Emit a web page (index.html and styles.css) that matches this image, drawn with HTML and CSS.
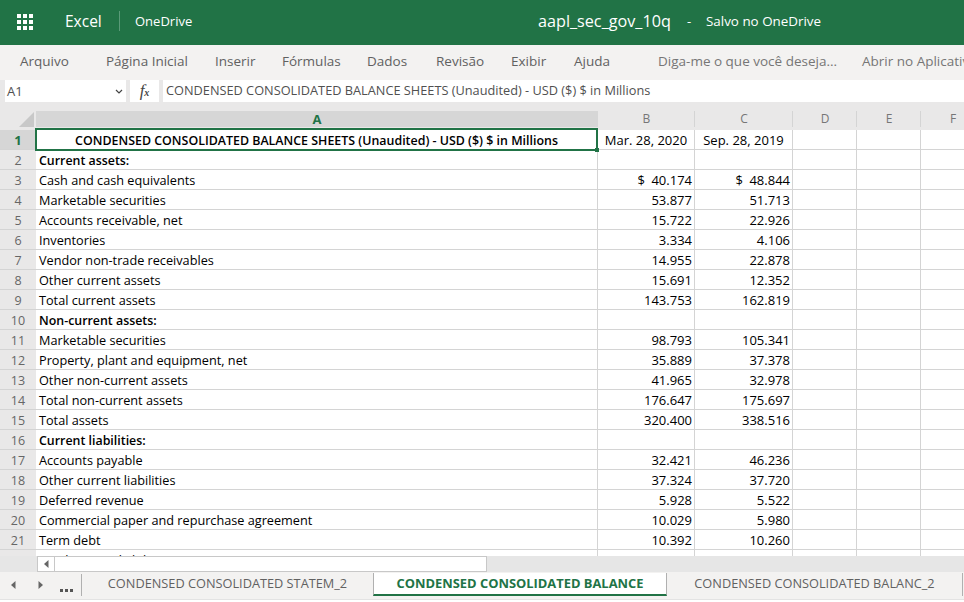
FILE: index.html
```html
<!DOCTYPE html>
<html lang="pt">

<head>
  <meta charset="UTF-8">
  <meta name="viewport" content="width=device-width, initial-scale=1.0">
  <title>aapl_sec_gov_10q - Excel</title>
  <link rel="stylesheet" href="styles.css">
</head>

<body>
  <header class="topbar">
    <svg class="waffle" width="16" height="16" viewBox="0 0 16 16" fill="#fff">
      <rect x="0" y="0" width="4" height="4"/><rect x="6" y="0" width="4" height="4"/><rect x="12" y="0" width="4" height="4"/>
      <rect x="0" y="6" width="4" height="4"/><rect x="6" y="6" width="4" height="4"/><rect x="12" y="6" width="4" height="4"/>
      <rect x="0" y="12" width="4" height="4"/><rect x="6" y="12" width="4" height="4"/><rect x="12" y="12" width="4" height="4"/>
    </svg>
    <span class="app-name">Excel</span>
    <span class="location">OneDrive</span>
    <span class="doc-name">aapl_sec_gov_10q</span>
    <span class="doc-dash">-</span>
    <span class="doc-status">Salvo no OneDrive</span>
  </header>

  <nav class="menu">
    <span class="menu-item menu-file">Arquivo</span>
    <span class="menu-item menu-home">Página Inicial</span>
    <span class="menu-item menu-insert">Inserir</span>
    <span class="menu-item menu-formulas">Fórmulas</span>
    <span class="menu-item menu-data">Dados</span>
    <span class="menu-item menu-review">Revisão</span>
    <span class="menu-item menu-view">Exibir</span>
    <span class="menu-item menu-help">Ajuda</span>
    <span class="menu-item menu-tell">Diga-me o que você deseja...</span>
    <span class="menu-item menu-open">Abrir no Aplicativo</span>
  </nav>

  <div class="formula-bar">
    <div class="name-box">
      <span>A1</span>
      <svg width="8" height="5" viewBox="0 0 8 5" fill="none" stroke="#444" stroke-width="1.2"><path d="M1 1l3 3 3-3"/></svg>
    </div>
    <div class="fx-box">f<span class="fx-sub">x</span></div>
    <div class="formula-input">CONDENSED CONSOLIDATED BALANCE SHEETS (Unaudited) - USD ($) $ in Millions</div>
  </div>

  <div class="grid-wrap">
    <table class="sheet">
      <colgroup>
        <col class="col-head"><col class="col-a"><col class="col-b"><col class="col-c"><col class="col-d"><col class="col-e"><col class="col-f">
      </colgroup>
      <thead>
        <tr>
          <th class="corner"><span class="corner-mark"></span></th>
          <th class="active">A</th><th>B</th><th>C</th><th>D</th><th>E</th><th>F</th>
        </tr>
      </thead>
      <tbody>
        <tr><th class="active">1</th><td class="title selected">CONDENSED CONSOLIDATED BALANCE SHEETS (Unaudited) - USD ($) $ in Millions<span class="handle"></span></td><td class="date">Mar. 28, 2020</td><td class="date">Sep. 28, 2019</td><td></td><td></td><td></td></tr>
        <tr><th>2</th><td class="bold">Current assets:</td><td></td><td></td><td></td><td></td><td></td></tr>
        <tr><th>3</th><td>Cash and cash equivalents</td><td class="num">$ 40.174</td><td class="num">$ 48.844</td><td></td><td></td><td></td></tr>
        <tr><th>4</th><td>Marketable securities</td><td class="num">53.877</td><td class="num">51.713</td><td></td><td></td><td></td></tr>
        <tr><th>5</th><td>Accounts receivable, net</td><td class="num">15.722</td><td class="num">22.926</td><td></td><td></td><td></td></tr>
        <tr><th>6</th><td>Inventories</td><td class="num">3.334</td><td class="num">4.106</td><td></td><td></td><td></td></tr>
        <tr><th>7</th><td>Vendor non-trade receivables</td><td class="num">14.955</td><td class="num">22.878</td><td></td><td></td><td></td></tr>
        <tr><th>8</th><td>Other current assets</td><td class="num">15.691</td><td class="num">12.352</td><td></td><td></td><td></td></tr>
        <tr><th>9</th><td>Total current assets</td><td class="num">143.753</td><td class="num">162.819</td><td></td><td></td><td></td></tr>
        <tr><th>10</th><td class="bold">Non-current assets:</td><td></td><td></td><td></td><td></td><td></td></tr>
        <tr><th>11</th><td>Marketable securities</td><td class="num">98.793</td><td class="num">105.341</td><td></td><td></td><td></td></tr>
        <tr><th>12</th><td>Property, plant and equipment, net</td><td class="num">35.889</td><td class="num">37.378</td><td></td><td></td><td></td></tr>
        <tr><th>13</th><td>Other non-current assets</td><td class="num">41.965</td><td class="num">32.978</td><td></td><td></td><td></td></tr>
        <tr><th>14</th><td>Total non-current assets</td><td class="num">176.647</td><td class="num">175.697</td><td></td><td></td><td></td></tr>
        <tr><th>15</th><td>Total assets</td><td class="num">320.400</td><td class="num">338.516</td><td></td><td></td><td></td></tr>
        <tr><th>16</th><td class="bold">Current liabilities:</td><td></td><td></td><td></td><td></td><td></td></tr>
        <tr><th>17</th><td>Accounts payable</td><td class="num">32.421</td><td class="num">46.236</td><td></td><td></td><td></td></tr>
        <tr><th>18</th><td>Other current liabilities</td><td class="num">37.324</td><td class="num">37.720</td><td></td><td></td><td></td></tr>
        <tr><th>19</th><td>Deferred revenue</td><td class="num">5.928</td><td class="num">5.522</td><td></td><td></td><td></td></tr>
        <tr><th>20</th><td>Commercial paper and repurchase agreement</td><td class="num">10.029</td><td class="num">5.980</td><td></td><td></td><td></td></tr>
        <tr><th>21</th><td>Term debt</td><td class="num">10.392</td><td class="num">10.260</td><td></td><td></td><td></td></tr>
        <tr><th></th><td>Total current liabilities</td><td></td><td></td><td></td><td></td><td></td></tr>
      </tbody>
    </table>
  </div>

  <div class="hscroll">
    <div class="hscroll-track">
      <span class="hscroll-arrow"><svg width="5" height="8" viewBox="0 0 5 8" fill="#666"><path d="M4.5 0v8L0 4z"/></svg></span>
      <span class="hscroll-thumb"></span>
    </div>
  </div>

  <div class="tabs">
    <div class="tab-nav">
      <svg width="5" height="8" viewBox="0 0 5 8" fill="#666"><path d="M4.5 0v8L0 4z"/></svg>
      <svg width="5" height="8" viewBox="0 0 5 8" fill="#666"><path d="M.5 0v8L5 4z"/></svg>
      <span class="tab-more">
        <i></i><i></i><i></i>
      </span>
    </div>
    <div class="tab tab-1">CONDENSED CONSOLIDATED STATEM_2</div>
    <div class="tab tab-2 current">CONDENSED CONSOLIDATED BALANCE</div>
    <div class="tab tab-3">CONDENSED CONSOLIDATED BALANC_2</div>
  </div>
</body>

</html>
```

FILE: styles.css
```css
html, body {
  margin: 0;
  height: 602px;
  overflow: hidden;
}

body {
  font-family: "Open Sans", "Noto Sans", sans-serif;
  background-color: white;
  color: #000;
  display: flex;
  flex-direction: column;
}

/* top bar */
.topbar {
  height: 45px;
  background-color: #217346;
  color: white;
  display: flex;
  align-items: center;
  flex: none;
}

.topbar span {
  margin-bottom: 3px;
}

.waffle {
  margin-left: 17px;
  margin-bottom: 1px;
}

.app-name {
  margin-left: 32px;
  font-size: 15.5px;
  width: 54px;
}

.location {
  border-left: 1px solid #5a9a78;
  height: 20px;
  line-height: 21px;
  padding-left: 15px;
  font-size: 13px;
  width: 403px;
}

.doc-name {
  font-size: 16.2px;
  width: 149px;
}

.doc-dash {
  font-size: 13px;
  width: 19px;
}

.doc-status {
  font-size: 13.4px;
}

/* ribbon tabs */
.menu {
  height: 30px;
  display: flex;
  align-items: center;
  flex: none;
  white-space: nowrap;
  overflow: hidden;
  padding-left: 20px;
  padding-top: 2px;
  box-sizing: border-box;
  background-color: #f3f2f1;
}

.menu-item {
  flex: none;
  font-size: 13.5px;
  color: #616161;
}

.menu-file { width: 86px; }
.menu-home { width: 109px; }
.menu-insert { width: 67px; }
.menu-formulas { width: 85px; }
.menu-data { width: 69px; }
.menu-review { width: 75px; }
.menu-view { width: 63px; }
.menu-help { width: 84px; }
.menu-tell { width: 204px; color: #767676; }
.menu-open { color: #767676; }

/* formula bar */
.formula-bar {
  height: 36px;
  flex: none;
  display: flex;
  align-items: flex-start;
  padding-top: 5px;
  box-sizing: border-box;
  background: linear-gradient(#f3f2f1 5px, #e9e8e8 5px);
  font-size: 12.75px;
  color: #505050;
}

.name-box,
.fx-box,
.formula-input {
  height: 22px;
  line-height: 21px;
  background-color: white;
}

.name-box {
  width: 121px;
  margin-left: 5px;
  padding: 0 3px 0 2px;
  box-sizing: border-box;
  display: flex;
  justify-content: space-between;
  align-items: center;
  font-size: 13px;
}

.fx-box {
  width: 29px;
  margin-left: 4px;
  text-align: center;
  font-family: "Liberation Serif", serif;
  font-style: italic;
  font-size: 17px;
  color: #444;
}

.fx-sub {
  font-size: 10px;
  font-weight: bold;
}

.formula-input {
  flex: 1;
  margin-left: 4px;
  padding-left: 3px;
  white-space: nowrap;
}

/* grid */
.grid-wrap {
  height: 445px;
  flex: none;
  overflow: hidden;
  background-color: white;
}

.sheet {
  border-collapse: separate;
  border-spacing: 0;
  table-layout: fixed;
  width: 985px;
  font-size: 12.7px;
}

.col-head { width: 36px; }
.col-a { width: 562px; }
.col-b { width: 97px; }
.col-c { width: 98px; }
.col-d { width: 64px; }
.col-e { width: 64px; }
.col-f { width: 64px; }

.sheet thead th {
  height: 19px;
  padding: 0;
  vertical-align: top;
  line-height: 16px;
  font-size: 12px;
  font-weight: normal;
  color: #767676;
  background: linear-gradient(#d4d4d4, #d4d4d4) right top / 1px 16px no-repeat #e9e8e8;
}

.sheet thead th.active {
  background: linear-gradient(#d6d6d6 16px, #e9e8e8 16px);
  color: #217346;
  font-weight: bold;
  font-size: 13px;
}

.sheet thead th.corner {
  position: relative;
  background: #e9e8e8;
}

.corner-mark {
  position: absolute;
  right: 2px;
  bottom: 3px;
  border-left: 15px solid transparent;
  border-bottom: 15px solid #c8c8c8;
}

.sheet tbody th {
  height: 18px;
  padding: 1px 0 0;
  background-color: #e9e8e8;
  border-bottom: 1px solid #d4d4d4;
  font-weight: normal;
  font-size: 12.5px;
  color: #666;
}

.sheet tbody th.active {
  background-color: #d6d6d6;
  color: #217346;
  font-weight: bold;
  font-size: 13px;
}

.sheet td {
  height: 18px;
  padding: 1px 3px 0;
  border-right: 1px solid #d4d4d4;
  border-bottom: 1px solid #d4d4d4;
  white-space: nowrap;
  overflow: hidden;
}

.sheet td.bold {
  font-weight: 600;
  font-size: 12.4px;
}

.sheet td.num {
  text-align: right;
  font-size: 13px;
  padding-right: 2px;
  word-spacing: 3px;
}

.sheet td.date {
  text-align: center;
  font-size: 13px;
}

.sheet td.title {
  text-align: center;
  font-weight: 600;
  font-size: 12.42px;
}

.sheet td.selected {
  position: relative;
  overflow: visible;
}

.sheet td.selected::after {
  content: "";
  position: absolute;
  top: -2px;
  bottom: -2px;
  left: -1px;
  right: -1px;
  border: 2px solid #217346;
}

.handle {
  position: absolute;
  right: -2px;
  bottom: -3px;
  width: 4px;
  height: 4px;
  background-color: #217346;
  z-index: 1;
}

/* horizontal scrollbar */
.hscroll {
  height: 16px;
  flex: none;
  background-color: #e6e6e6;
  padding-left: 37px;
}

.hscroll-track {
  width: 450px;
  height: 16px;
  display: flex;
  background-color: white;
  border: 1px solid #c8c8c8;
  box-sizing: border-box;
}

.hscroll-arrow {
  width: 16px;
  display: flex;
  align-items: center;
  justify-content: center;
  border-right: 1px solid #c8c8c8;
}

/* sheet tabs */
.tabs {
  height: 23px;
  padding: 1px 0 3px;
  flex: none;
  display: flex;
  font-size: 12.75px;
  background-color: #f3f2f1;
  border-bottom: 1px solid #e3e3e3;
}

.tab-nav {
  width: 82px;
  display: flex;
  align-items: center;
  padding-left: 11px;
  box-sizing: border-box;
  gap: 22px;
  background: linear-gradient(#b0b0b0, #b0b0b0) right top 1px / 1px 22px no-repeat;
}

.tab-more {
  display: flex;
  gap: 2px;
  margin: 11px 0 0 -5px;
}

.tab-more i {
  width: 3px;
  height: 3px;
  background-color: #555;
}

.tab {
  display: flex;
  align-items: center;
  justify-content: center;
  color: #616161;
  box-sizing: border-box;
  white-space: nowrap;
  padding-bottom: 3px;
}

.tab-1 { width: 291px; }
.tab-2 { width: 294px; }
.tab-3 { width: 296px; border-right: 1px solid #b0b0b0; }

.tab.current {
  background-color: white;
  color: #217346;
  font-weight: bold;
  font-size: 12.9px;
  padding-bottom: 1px;
  border-left: 1px solid #b0b0b0;
  border-right: 1px solid #b0b0b0;
  border-bottom: 2px solid #217346;
}
```
